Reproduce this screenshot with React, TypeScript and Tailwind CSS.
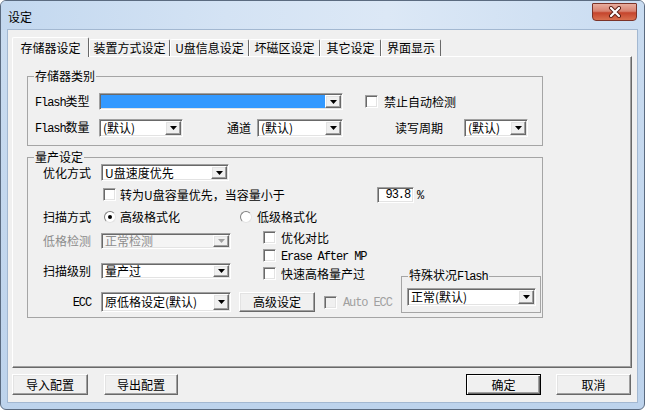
import React from "react";

const sunken =
  "border border-t-[#a0a0a0] border-l-[#a0a0a0] border-b-white border-r-white shadow-[inset_1px_1px_0_#696969,inset_-1px_-1px_0_#e3e3e3]";
const raised =
  "border border-t-white border-l-white border-b-[#696969] border-r-[#696969] shadow-[inset_-1px_-1px_0_#a0a0a0,inset_1px_1px_0_#e3e3e3] bg-[#f0f0f0]";

function M({ children }: { children: React.ReactNode }) {
  return <span className="font-['Liberation_Mono',monospace] text-[12px] tracking-[-1.1px]">{children}</span>;
}

function Combo({
  className,
  text,
  selected,
  disabled,
}: {
  className: string;
  text?: string;
  selected?: boolean;
  disabled?: boolean;
}) {
  return (
    <div className={`${className} ${sunken} ${disabled ? "bg-[#f4f4f4]" : "bg-white"} flex p-px shrink-0`}>
      <div
        className={`flex-1 flex items-center pl-[2px] whitespace-nowrap ${selected ? "bg-[#3399ff]" : ""} ${
          disabled ? "text-[#8d8d8d]" : ""
        }`}
      >
        {text}
      </div>
      <div className={`w-[16px] ${raised} flex items-center justify-center`}>
        <svg width="7" height="4" viewBox="0 0 7 4">
          <path d="M0 0h7L3.5 4z" fill={disabled ? "#a0a0a0" : "#000"} />
        </svg>
      </div>
    </div>
  );
}

function Check({ disabled }: { disabled?: boolean }) {
  return <div className={`w-[13px] h-[13px] shrink-0 ${sunken} ${disabled ? "bg-[#f0f0f0]" : "bg-white"}`} />;
}

function Radio({ on }: { on?: boolean }) {
  return (
    <div className="w-[12px] h-[12px] shrink-0 rounded-full border border-t-[#808080] border-l-[#808080] border-b-[#e3e3e3] border-r-[#e3e3e3] bg-white flex items-center justify-center">
      {on && <div className="w-[4px] h-[4px] rounded-full bg-black" />}
    </div>
  );
}

function Btn({ className, children, def }: { className: string; children: React.ReactNode; def?: boolean }) {
  return (
    <div
      className={`${className} flex items-center justify-center bg-[#f0f0f0] shrink-0 ${
        def
          ? "border border-black shadow-[inset_1px_1px_0_#fff,inset_-1px_-1px_0_#696969,inset_-2px_-2px_0_#a0a0a0]"
          : raised
      }`}
    >
      {children}
    </div>
  );
}

const tabs = [
  { label: "装置方式设定", w: "w-[81px]" },
  { label: "U盘信息设定", w: "w-[79px]" },
  { label: "坏磁区设定", w: "w-[71px]" },
  { label: "其它设定", w: "w-[61px]" },
  { label: "界面显示", w: "w-[60px]" },
];

export default function App() {
  return (
    <div className="font-['Noto_Sans_CJK_SC',sans-serif] text-[12px] leading-[14px] text-black w-[645px] h-[410px] bg-white">
      <div className="w-[645px] h-[410px] flex flex-col rounded-[6px] border border-[#5b6b80] bg-[linear-gradient(180deg,#cadcf0,#bdd3ec)] overflow-hidden">
        {/* Title bar */}
        <div className="h-[29px] shrink-0 flex items-start px-[7px] bg-[linear-gradient(90deg,#c3d8ef_0%,#d4e3f4_35%,#dce8f6_60%,#c9dcf1_100%)]">
          <span className="mt-[9px]">设定</span>
          <div className="ml-auto mt-[2px] w-[45px] h-[18px] rounded-b-[4px] rounded-t-[1px] border border-[#7b3328] bg-[linear-gradient(180deg,#e8ad9e_0%,#d88270_45%,#c5452d_55%,#d9704f_100%)] flex items-center justify-center">
            <svg width="14" height="12" viewBox="0 0 14 12">
              <path d="M3 2l8 8M11 2l-8 8" stroke="#5a1d14" strokeWidth="4" strokeLinecap="round" />
              <path d="M3 2l8 8M11 2l-8 8" stroke="#fff" strokeWidth="2.2" strokeLinecap="round" />
            </svg>
          </div>
        </div>

        {/* Client area */}
        <div className="mx-[7px] h-[372px] shrink-0 bg-[#f0f0f0] shadow-[0_0_0_1px_#a3b8d1] flex flex-col pt-[7px]">
          {/* Tabs */}
          <div className="flex h-[19px] ml-[4px] items-start relative z-10">
            <div className="w-[77px] h-[20px] bg-[#f0f0f0] border-l border-t border-r border-l-white border-t-white border-r-[#696969] rounded-t-[2px] flex items-center justify-center">
              存储器设定
            </div>
            {tabs.map((t) => (
              <div
                key={t.label}
                className={`${t.w} h-[17px] mt-[2px] border-l border-t border-r border-l-white border-t-white border-r-[#696969] rounded-t-[2px] flex items-center justify-center`}
              >
                {t.label}
              </div>
            ))}
          </div>

          {/* Tab panel */}
          <div className="ml-[4px] w-[620px] h-[312px] shrink-0 border border-t-white border-l-white border-r-[#696969] border-b-[#696969] shadow-[inset_-1px_-1px_0_#a0a0a0]">
            {/* 存储器类别 */}
            <fieldset className="ml-[14px] mt-[12px] w-[516px] border border-[#a5a5a5]">
              <legend className="ml-[6px] px-[1px]">存储器类别</legend>
              <div className="pl-[7px] pt-[10px] pb-[8px]">
                <div className="flex items-center h-[17px]">
                  <span className="w-[64px]">
                    <M>Flash</M>类型
                  </span>
                  <Combo className="w-[244px] h-[17px]" selected />
                  <div className="ml-[22px]">
                    <Check />
                  </div>
                  <span className="ml-[6px]">禁止自动检测</span>
                </div>
                <div className="flex items-center h-[18px] mt-[9px]">
                  <span className="w-[64px]">
                    <M>Flash</M>数量
                  </span>
                  <Combo className="w-[84px] h-[18px]" text="(默认)" />
                  <span className="ml-[44px] w-[24px]">通道</span>
                  <Combo className="ml-[6px] w-[86px] h-[18px]" text="(默认)" />
                  <span className="ml-[52px] w-[48px]">读写周期</span>
                  <Combo className="ml-[21px] w-[64px] h-[18px]" text="(默认)" />
                </div>
              </div>
            </fieldset>

            {/* 量产设定 */}
            <fieldset className="ml-[14px] mt-[4px] w-[516px] border border-[#a5a5a5]">
              <legend className="ml-[6px] px-[1px]">量产设定</legend>
              <div className="pl-[15px] pb-[4px]">
                <div className="flex items-center h-[17px]">
                  <span className="w-[48px] mr-[10px]">优化方式</span>
                  <Combo className="w-[128px] h-[17px]" text="U盘速度优先" />
                </div>
                <div className="flex items-center h-[17px] mt-[5px]">
                  <div className="ml-[60px]">
                    <Check />
                  </div>
                  <span className="ml-[4px] w-[257px] whitespace-nowrap">转为U盘容量优先，当容量小于</span>
                  <div className={`w-[37px] h-[16px] ${sunken} bg-white flex items-center justify-end pr-[3px]`}>
                    <M>93.8</M>
                  </div>
                  <span className="ml-[3px]">
                    <M>%</M>
                  </span>
                </div>
                <div className="flex items-center h-[16px] mt-[6px]">
                  <span className="w-[48px] mr-[10px]">扫描方式</span>
                  <div className="ml-[3px]">
                    <Radio on />
                  </div>
                  <span className="ml-[4px] w-[120px]">高级格式化</span>
                  <Radio />
                  <span className="ml-[5px]">低级格式化</span>
                </div>

                <div className="flex items-end">
                  <div className="w-[358px] pt-[4px] pb-[1px]">
                    <div className="flex">
                      <div className="w-[220px]">
                        <div className="flex items-center h-[16px] mt-[4px]">
                          <span className="w-[48px] mr-[10px] text-[#8d8d8d]">低格检测</span>
                          <Combo className="w-[130px] h-[16px]" text="正常检测" disabled />
                        </div>
                        <div className="flex items-center h-[16px] mt-[14px]">
                          <span className="w-[48px] mr-[10px]">扫描级别</span>
                          <Combo className="w-[130px] h-[16px]" text="量产过" />
                        </div>
                      </div>
                      <div className="flex flex-col gap-[1px]">
                        <div className="flex items-center h-[17px]">
                          <Check />
                          <span className="ml-[5px]">优化对比</span>
                        </div>
                        <div className="flex items-center h-[17px]">
                          <Check />
                          <span className="ml-[5px]">
                            <M>Erase After MP</M>
                          </span>
                        </div>
                        <div className="flex items-center h-[17px]">
                          <Check />
                          <span className="ml-[5px]">快速高格量产过</span>
                        </div>
                      </div>
                    </div>
                    <div className="flex items-center h-[20px] mt-[10px]">
                      <span className="w-[48px] mr-[10px] text-right">
                        <M>ECC</M>
                      </span>
                      <Combo className="w-[130px] h-[20px]" text="原低格设定(默认)" />
                      <Btn className="ml-[8px] w-[76px] h-[20px]">高级设定</Btn>
                      <div className="ml-[9px]">
                        <Check disabled />
                      </div>
                      <span className="ml-[6px] text-[#a0a0a0]">
                        <M>Auto ECC</M>
                      </span>
                    </div>
                  </div>

                  <fieldset className="w-[140px] border border-[#a5a5a5]">
                    <legend className="ml-[6px] px-[1px]">
                      特殊状况<M>Flash</M>
                    </legend>
                    <div className="pl-[5px] pt-[4px] pb-[6px]">
                      <Combo className="w-[129px] h-[18px]" text="正常(默认)" />
                    </div>
                  </fieldset>
                </div>
              </div>
            </fieldset>
          </div>

          {/* Bottom buttons */}
          <div className="flex mt-[6px] pl-[4px] pr-[6px] h-[21px]">
            <Btn className="w-[76px] h-[21px]">导入配置</Btn>
            <Btn className="ml-[16px] w-[74px] h-[21px]">导出配置</Btn>
            <Btn className="ml-auto w-[75px] h-[21px]" def>
              确定
            </Btn>
            <Btn className="ml-[15px] w-[75px] h-[21px]">取消</Btn>
          </div>
        </div>
      </div>
    </div>
  );
}
